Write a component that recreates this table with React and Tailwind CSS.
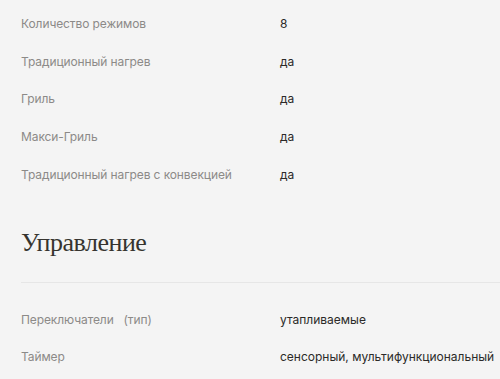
import React from 'react';

const features = [
    ['Количество режимов', '8'],
    ['Традиционный нагрев', 'да'],
    ['Гриль', 'да'],
    ['Макси-Гриль', 'да'],
    ['Традиционный нагрев с конвекцией', 'да'],
];

const controls = [
    ['Переключатели\u00a0\u00a0\u00a0(тип)', 'утапливаемые'],
    ['Таймер', 'сенсорный, мультифункциональный'],
];

function SpecRow({ label, value }) {
    return (
        <div className="flex h-[37.75px] items-center whitespace-nowrap text-[12px]">
            <div className="w-[259px] shrink-0 tracking-[-0.1px] text-[#8c8a88]">{label}</div>
            <div className="text-[#2b2a28]">{value}</div>
        </div>
    );
}

export default function App() {
    return (
        <div className="min-h-[379px] w-[500px] overflow-hidden bg-[#f4f4f4] pl-[21px] pt-[5px] font-['Inter'] antialiased">
            {/* Программы */}
            <div>
                {features.map(([label, value]) => (
                    <SpecRow key={label} label={label} value={value} />
                ))}
            </div>

            {/* Управление */}
            <h2 className="mt-[34px] font-['Liberation_Serif'] text-[26px] leading-[30px] tracking-[-0.5px] text-[#36342f]">
                Управление
            </h2>
            <div className="mt-[24px] border-t border-[#e6e6e6]"></div>

            <div className="pt-[18px]">
                {controls.map(([label, value]) => (
                    <SpecRow key={label} label={label} value={value} />
                ))}
            </div>
        </div>
    );
}
